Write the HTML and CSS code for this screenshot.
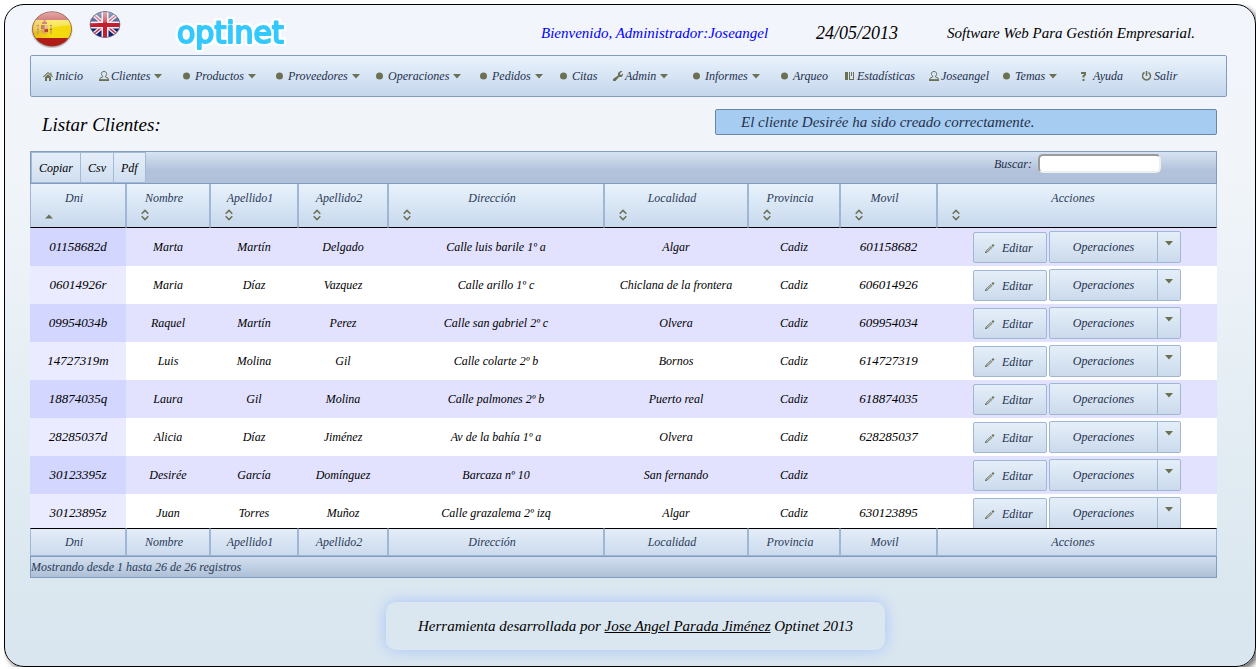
FILE: index.html
```html
<!DOCTYPE html>
<html lang="es">
<head>
<meta charset="utf-8">
<title>Listar Clientes - Optinet</title>
<link rel="stylesheet" href="styles.css">
</head>
<body>
<svg class="sprite" aria-hidden="true">
  <symbol id="i-home" viewBox="0 0 12 12"><path d="M5 2L0 6.500l.7.700L5 3.300l4.300 3.900.7-.7L8.500 5V2.500H7.500v1.500z"/><path d="M5 4.300L2 7v4h2V8h2v3h2V7z"/></symbol>
  <symbol id="i-user" viewBox="0 0 12 12"><path fill="none" stroke="currentColor" d="M5 1.500c3 0 3.400 3.200 1.500 4.600v.9l2.300.9.900 1.900H.5l.9-1.900 2.300-.9v-.9C1.600 4.700 2 1.500 5 1.500z"/><path d="M0 9.500h10V11H0z"/></symbol>
  <symbol id="i-dot" viewBox="0 0 12 12"><circle cx="3.500" cy="6" r="3.500"/></symbol>
  <symbol id="i-wrench" viewBox="0 0 12 12"><path d="M7.500 1L5 3v2.500L0 9v2h2.500L6 7h2.500L10 5V3.500L8 5 7 4.500V3.500L9.500 1z"/></symbol>
  <symbol id="i-book" viewBox="0 0 12 12"><path d="M0 2h3v8H0zM4 2h1v8H4zM5 9h4v1H5zM8 2h1v8H8zM6 2h1v4H6z"/></symbol>
  <symbol id="i-help" viewBox="0 0 12 12"><path d="M0 2h5v3L3.500 6.500v1h-2V5.500L3 4.500V4H0zM1.500 9h2v2h-2z"/></symbol>
  <symbol id="i-power" viewBox="0 0 12 12"><path fill="none" stroke="currentColor" stroke-width="1.500" d="M2.500 2.500a4 4 0 1 0 4 0"/><path d="M3.800 1h1.500v5H3.800z"/></symbol>
  <symbol id="i-down" viewBox="0 0 8 5"><path d="M0 0h8L4 4.500z"/></symbol>
  <symbol id="i-up" viewBox="0 0 8 5"><path d="M0 4.500h8L4 .5z"/></symbol>
  <symbol id="i-sort" viewBox="0 0 8 12"><path fill="none" stroke="currentColor" stroke-width="1.500" d="M.7 4.700L4 1.400l3.300 3.300M.7 7.300L4 10.600l3.300-3.300"/></symbol>
  <symbol id="i-pencil" viewBox="0 0 12 12"><path fill="none" stroke="currentColor" d="M2 9.200L7 4.500l1 1-5 4.700-1.500.3z"/><path d="M7.500 3.500L9 2l1.500 1.500L9 5zM1 9.500L2.500 11H1z"/></symbol>
</svg>

<main class="page">
  <header class="top">
    <nav class="langs" aria-label="Idioma">
      <a href="#es" aria-label="Español">
        <svg class="flag-es" viewBox="0 0 42 38">
          <defs>
            <clipPath id="c1"><ellipse cx="21" cy="18" rx="19.500" ry="17.300"/></clipPath>
            <linearGradient id="gl" x1="0" y1="0" x2="0" y2="1"><stop offset="0" stop-color="#fff" stop-opacity=".65"/><stop offset="1" stop-color="#fff" stop-opacity=".15"/></linearGradient>
            <linearGradient id="ye" x1="0" y1="0" x2="1" y2="0"><stop offset="0" stop-color="#e5b21a"/><stop offset=".5" stop-color="#f5dc10"/><stop offset="1" stop-color="#f0d80a"/></linearGradient>
          </defs>
          <ellipse cx="21" cy="19" rx="20.500" ry="18" fill="#a9a9ad" opacity=".6"/>
          <g clip-path="url(#c1)"><path fill="#b01d18" d="M0 0h42v38H0z"/><path fill="url(#ye)" d="M0 9h42v18H0z"/><path fill="#d9a860" d="M10 14h7v7q-3.500 4-7 0z"/><path fill="#b8442c" d="M10 14h3.500v4H10zM13.500 18H17v3h-3.500zM11 11h5v2h-5zM12.500 9h2v2h-2zM6 14h2v1H6zM6 18h2v1H6zM19 14h2v1h-2zM19 18h2v1h-2z"/><path fill="#a08a98" d="M6.500 15h1v8h-1zM19.500 15h1v8h-1z"/><path fill="url(#gl)" d="M0 0h42v14Q21 15 0 22z"/></g>
          <ellipse cx="21" cy="18" rx="19.500" ry="17.300" fill="none" stroke="#8a4a34" stroke-opacity=".55"/>
        </svg>
      </a>
      <a href="#en" aria-label="English">
        <svg class="flag-en" viewBox="0 0 32 28">
          <clipPath id="c2"><ellipse cx="16" cy="13.500" rx="15" ry="13"/></clipPath>
          <g clip-path="url(#c2)"><path fill="#14246c" d="M0 0h32v28H0z"/><path stroke="#e4e6f0" stroke-width="4" d="M0 0l32 27M32 0L0 27"/><path stroke="#c8283c" stroke-width="1.300" d="M0 0l32 27M32 0L0 27"/><path fill="#f0f0f5" d="M12.500 0h7v28h-7zM0 10.500h32v7H0z"/><path fill="#c41e30" d="M14 0h4v28h-4zM0 12h32v4H0z"/><path fill="url(#gl)" d="M0 0h32v12Q16 10 0 14z"/></g>
          <ellipse cx="16" cy="13.500" rx="15" ry="13" fill="none" stroke="#5a5f80" stroke-opacity=".6"/>
        </svg>
      </a>
    </nav>
    <svg class="logo" viewBox="0 0 120 44" role="img" aria-label="optinet">
      <text class="logo-text" x="2" y="34">optinet</text>
    </svg>
    <span class="welcome">Bienvenido, Administrador:Joseangel</span>
    <time class="date">24/05/2013</time>
    <span class="slogan">Software Web Para Gestión Empresarial.</span>
  </header>

  <nav class="menu" aria-label="Principal">
    <a href="#"><svg class="ic"><use href="#i-home"/></svg>Inicio</a>
    <a href="#"><svg class="ic"><use href="#i-user"/></svg>Clientes<svg class="dn"><use href="#i-down"/></svg></a>
    <a href="#"><svg class="ic"><use href="#i-dot"/></svg>Productos<svg class="dn"><use href="#i-down"/></svg></a>
    <a href="#"><svg class="ic"><use href="#i-dot"/></svg>Proveedores<svg class="dn"><use href="#i-down"/></svg></a>
    <a href="#"><svg class="ic"><use href="#i-dot"/></svg>Operaciones<svg class="dn"><use href="#i-down"/></svg></a>
    <a href="#"><svg class="ic"><use href="#i-dot"/></svg>Pedidos<svg class="dn"><use href="#i-down"/></svg></a>
    <a href="#"><svg class="ic"><use href="#i-dot"/></svg>Citas</a>
    <a href="#"><svg class="ic"><use href="#i-wrench"/></svg>Admin<svg class="dn"><use href="#i-down"/></svg></a>
    <a href="#"><svg class="ic"><use href="#i-dot"/></svg>Informes<svg class="dn"><use href="#i-down"/></svg></a>
    <a href="#"><svg class="ic"><use href="#i-dot"/></svg>Arqueo</a>
    <a href="#"><svg class="ic"><use href="#i-book"/></svg>Estadísticas</a>
    <a href="#"><svg class="ic"><use href="#i-user"/></svg>Joseangel</a>
    <a href="#"><svg class="ic"><use href="#i-dot"/></svg>Temas<svg class="dn"><use href="#i-down"/></svg></a>
    <a href="#"><svg class="ic"><use href="#i-help"/></svg>Ayuda</a>
    <a href="#"><svg class="ic"><use href="#i-power"/></svg>Salir</a>
  </nav>

  <div class="heading">
    <h1>Listar Clientes:</h1>
    <p class="notice" role="status">El cliente Desirée ha sido creado correctamente.</p>
  </div>

  <section class="grid">
    <div class="toolbar">
      <div class="export"><button type="button">Copiar</button><button type="button">Csv</button><button type="button">Pdf</button></div>
      <div class="search"><label for="q">Buscar:</label><input id="q" type="text"></div>
    </div>
    <table class="head">
      <colgroup><col class="c1"><col class="c2"><col class="c3"><col class="c4"><col class="c5"><col class="c6"><col class="c7"><col class="c8"><col></colgroup>
      <thead><tr>
        <th>Dni<svg class="up"><use href="#i-up"/></svg></th>
        <th>Nombre<svg class="so"><use href="#i-sort"/></svg></th>
        <th>Apellido1<svg class="so"><use href="#i-sort"/></svg></th>
        <th>Apellido2<svg class="so"><use href="#i-sort"/></svg></th>
        <th>Dirección<svg class="so"><use href="#i-sort"/></svg></th>
        <th>Localidad<svg class="so"><use href="#i-sort"/></svg></th>
        <th>Provincia<svg class="so"><use href="#i-sort"/></svg></th>
        <th>Movil<svg class="so"><use href="#i-sort"/></svg></th>
        <th>Acciones<svg class="so"><use href="#i-sort"/></svg></th>
      </tr></thead>
    </table>
    <div class="scroll">
    <table class="rows">
      <colgroup><col class="c1"><col class="c2"><col class="c3"><col class="c4"><col class="c5"><col class="c6"><col class="c7"><col class="c8"><col></colgroup>
      <tbody>
        <tr><td>01158682d</td><td>Marta</td><td>Martín</td><td>Delgado</td><td>Calle luis barile 1º a</td><td>Algar</td><td>Cadiz</td><td>601158682</td><td><div class="acts"><button type="button" class="edit"><svg class="ic"><use href="#i-pencil"/></svg>Editar</button><button type="button" class="ops">Operaciones</button><button type="button" class="more" aria-label="Más"><svg class="dn"><use href="#i-down"/></svg></button></div></td></tr>
        <tr><td>06014926r</td><td>Maria</td><td>Díaz</td><td>Vazquez</td><td>Calle arillo 1º c</td><td>Chiclana de la frontera</td><td>Cadiz</td><td>606014926</td><td><div class="acts"><button type="button" class="edit"><svg class="ic"><use href="#i-pencil"/></svg>Editar</button><button type="button" class="ops">Operaciones</button><button type="button" class="more" aria-label="Más"><svg class="dn"><use href="#i-down"/></svg></button></div></td></tr>
        <tr><td>09954034b</td><td>Raquel</td><td>Martín</td><td>Perez</td><td>Calle san gabriel 2º c</td><td>Olvera</td><td>Cadiz</td><td>609954034</td><td><div class="acts"><button type="button" class="edit"><svg class="ic"><use href="#i-pencil"/></svg>Editar</button><button type="button" class="ops">Operaciones</button><button type="button" class="more" aria-label="Más"><svg class="dn"><use href="#i-down"/></svg></button></div></td></tr>
        <tr><td>14727319m</td><td>Luis</td><td>Molina</td><td>Gil</td><td>Calle colarte 2º b</td><td>Bornos</td><td>Cadiz</td><td>614727319</td><td><div class="acts"><button type="button" class="edit"><svg class="ic"><use href="#i-pencil"/></svg>Editar</button><button type="button" class="ops">Operaciones</button><button type="button" class="more" aria-label="Más"><svg class="dn"><use href="#i-down"/></svg></button></div></td></tr>
        <tr><td>18874035q</td><td>Laura</td><td>Gil</td><td>Molina</td><td>Calle palmones 2º b</td><td>Puerto real</td><td>Cadiz</td><td>618874035</td><td><div class="acts"><button type="button" class="edit"><svg class="ic"><use href="#i-pencil"/></svg>Editar</button><button type="button" class="ops">Operaciones</button><button type="button" class="more" aria-label="Más"><svg class="dn"><use href="#i-down"/></svg></button></div></td></tr>
        <tr><td>28285037d</td><td>Alicia</td><td>Díaz</td><td>Jiménez</td><td>Av de la bahía 1º a</td><td>Olvera</td><td>Cadiz</td><td>628285037</td><td><div class="acts"><button type="button" class="edit"><svg class="ic"><use href="#i-pencil"/></svg>Editar</button><button type="button" class="ops">Operaciones</button><button type="button" class="more" aria-label="Más"><svg class="dn"><use href="#i-down"/></svg></button></div></td></tr>
        <tr><td>30123395z</td><td>Desirée</td><td>García</td><td>Domínguez</td><td>Barcaza nº 10</td><td>San fernando</td><td>Cadiz</td><td></td><td><div class="acts"><button type="button" class="edit"><svg class="ic"><use href="#i-pencil"/></svg>Editar</button><button type="button" class="ops">Operaciones</button><button type="button" class="more" aria-label="Más"><svg class="dn"><use href="#i-down"/></svg></button></div></td></tr>
        <tr><td>30123895z</td><td>Juan</td><td>Torres</td><td>Muñoz</td><td>Calle grazalema 2º izq</td><td>Algar</td><td>Cadiz</td><td>630123895</td><td><div class="acts"><button type="button" class="edit"><svg class="ic"><use href="#i-pencil"/></svg>Editar</button><button type="button" class="ops">Operaciones</button><button type="button" class="more" aria-label="Más"><svg class="dn"><use href="#i-down"/></svg></button></div></td></tr>
      </tbody>
    </table>
    </div>
    <table class="foot">
      <colgroup><col class="c1"><col class="c2"><col class="c3"><col class="c4"><col class="c5"><col class="c6"><col class="c7"><col class="c8"><col></colgroup>
      <tfoot><tr><th>Dni</th><th>Nombre</th><th>Apellido1</th><th>Apellido2</th><th>Dirección</th><th>Localidad</th><th>Provincia</th><th>Movil</th><th>Acciones</th></tr></tfoot>
    </table>
    <div class="status">Mostrando desde 1 hasta 26 de 26 registros</div>
  </section>

  <footer class="bottom">
    <div class="credit">Herramienta desarrollada por <a href="#autor">Jose Angel Parada Jiménez</a> Optinet 2013</div>
  </footer>
</main>
</body>
</html>
```
FILE: styles.css
```css
* { box-sizing: border-box; }
body {
  margin: 4px;
  background: #fff;
  color: #000;
  font: italic 12px/20px "Liberation Serif", serif;
}
a { color: inherit; }
svg { fill: currentColor; flex: none; }
button, input { font: inherit; margin: 0; }
.sprite { position: absolute; width: 0; height: 0; }

.page {
  padding: 0 28px 16px 25px;
  border: 1px solid #000;
  border-radius: 20px;
  background: linear-gradient(#f2f5fb 0%, #f1f5fa 25%, #dce8f0 85%, #d9e6ef 100%);
  box-shadow: 3px 3px 5px #777;
}

/* header */
.top { display: flex; height: 50px; align-items: flex-start; font-size: 15px; line-height: 24px; }
.langs { display: flex; gap: 16px; width: 145px; padding: 6px 0 0 1px; }
.langs a { display: block; }
.flag-es { display: block; width: 42px; height: 38px; }
.flag-en { display: block; width: 32px; height: 28px; }
.logo {
  width: 120px;
  height: 44px;
  margin: 4px 246px 0 0;
  overflow: visible;
  font: normal 400 30px "DejaVu Sans", sans-serif;
  stroke-linejoin: round;
  filter: drop-shadow(2px 0 0 #fff) drop-shadow(-2px 0 0 #fff) drop-shadow(0 2px 0 #fff) drop-shadow(0 -2px 0 #fff);
}
.logo-text { fill: #33c9ff; stroke: #33c9ff; stroke-width: 2px; }
.welcome, .date, .slogan { padding-top: 16px; white-space: nowrap; }
.welcome { width: 275px; color: #00f; }
.date { width: 131px; font-size: 18px; }

/* main menu */
.menu {
  display: grid;
  grid-template-columns: 56fr 84fr 93fr 100fr 104fr 80fr 53fr 80fr 88fr 64fr 84fr 74fr 78fr 61fr 84fr;
  align-items: center;
  height: 42px;
  padding-left: 12px;
  border: 1px solid #809cc2;
  border-radius: 2px;
  background: linear-gradient(#e9f3fc, #c5d6ec);
  color: #24304c;
}
.menu a { display: flex; align-items: center; white-space: nowrap; text-decoration: none; }
.ic { width: 12px; height: 12px; color: #6c7053; }
.dn { width: 8px; height: 5px; color: #6c7053; }
.menu .dn { margin-left: 4px; }

/* title and notice */
.heading { display: flex; justify-content: space-between; align-items: flex-start; height: 54px; padding: 12px 10px 0 12px; }
.heading h1 { margin: 0; padding-top: 4px; font-size: 19px; line-height: 24px; font-weight: 400; }
.notice {
  flex: 0 0 502px;
  margin: 0;
  padding: 0 25px;
  border: 1px solid #6d86a6;
  border-radius: 2px;
  background: #a6cdf1;
  color: #24304c;
  font-size: 15px;
  line-height: 24px;
}

/* data grid */
.grid { margin-right: 10px; color: #2b3a58; }
.toolbar {
  display: flex;
  justify-content: space-between;
  height: 33px;
  border: 1px solid #809cc2;
  background: linear-gradient(#d6e3f3, #b2c2da 60%, #b0c1d9);
}
.export { display: flex; }
.export button {
  padding: 0 7px;
  border: 1px solid #a3b9d4;
  border-left-width: 0;
  background: linear-gradient(#e5eff9, #cfdef0);
  color: #000;
}
.export button:first-child { border-left-width: 1px; }
.search { display: flex; align-items: flex-start; gap: 6px; padding: 2px 55px 0 0; color: #24304c; }
.search input {
  width: 123px;
  height: 19px;
  border: 2px solid;
  border-color: #9a9a9a #eee #eee #9a9a9a;
  border-radius: 5px;
  background: #fff;
}

table { width: 100%; table-layout: fixed; border-collapse: separate; border-spacing: 0; }
th, td { padding: 0; text-align: center; white-space: nowrap; }
th { font-weight: 400; }
.c1 { width: 96px; } .c2 { width: 84px; } .c3 { width: 88px; }
.c4 { width: 90px; } .c5 { width: 216px; } .c6 { width: 144px; }
.c7 { width: 92px; } .c8 { width: 97px; }
.head th, .foot th {
  border-right: 1px solid #9fb6d4;
  border-left: 1px solid #9fb6d4;
  background: linear-gradient(#e8f2fc, #c8d9ed);
}
.head th { height: 44px; padding: 4px 8px 0 0; border-bottom: 1px solid #000; vertical-align: top; }
.head svg { display: block; margin-left: 14px; color: #6c7053; }
.head .so { width: 8px; height: 12px; margin-top: 1px; margin-bottom: 5px; }
.head .up { width: 8px; height: 5px; margin-top: 6px; }
.foot th { height: 28px; padding-right: 8px; border-top: 1px solid #000; border-bottom: 1px solid #9fb6d4; background: linear-gradient(#e3edf8, #ccdbee); }

.scroll { height: 300px; overflow: hidden; color: #000; }
.rows td { height: 38px; }
.rows td:first-child, .rows td:nth-child(8) { font-size: 13px; }
.rows tr { background: #fff; }
.rows tr:nth-child(odd) { background: #e2e2ff; }
.rows td:first-child { background: #eaebff; }
.rows tr:nth-child(odd) td:first-child { background: #d3d6ff; }

.acts { display: flex; justify-content: center; align-items: flex-end; }
.acts button {
  height: 32px;
  padding: 0;
  border: 1px solid #9fb6d4;
  border-radius: 2px;
  background: linear-gradient(#e5eff9, #cbdaec);
  color: #24304c;
}
.acts .edit { display: flex; align-items: center; gap: 6px; width: 74px; height: 31px; margin-right: 2px; padding-left: 10px; }
.acts .ops { width: 109px; border-radius: 2px 0 0 2px; }
.acts .more { display: flex; justify-content: center; width: 24px; margin-left: -1px; padding-top: 9px; border-radius: 0 2px 2px 0; }

.status { height: 22px; border: 1px solid #809cc2; background: linear-gradient(#d3dff0, #aec0d6); }

.bottom { display: flex; justify-content: center; padding: 24px 0 0 14px; }
.credit {
  padding: 12px 32px;
  border-radius: 10px;
  background: #dbe7f0;
  box-shadow: 0 0 15px #a8c2f8;
  font-size: 15px;
  line-height: 24px;
}
```
